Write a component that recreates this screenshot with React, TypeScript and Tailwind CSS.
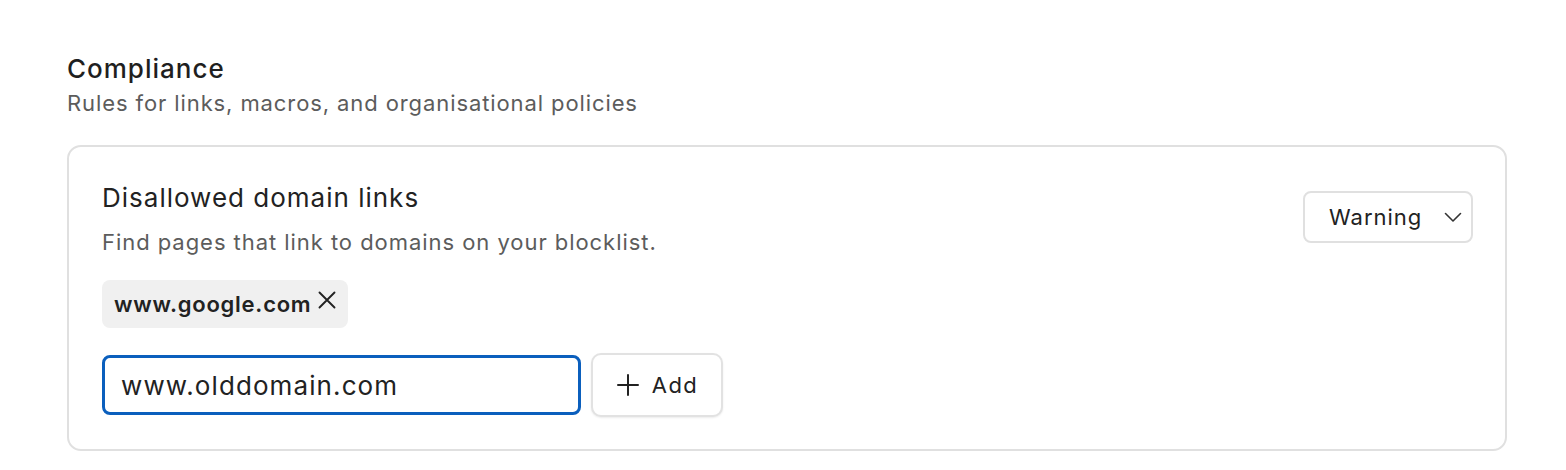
import React from "react";

export default function App() {
  return (
    <div
      className="w-[1566px] h-[470px] bg-white pl-[67px] pr-[60px] pt-[53px] text-[#222222]"
      style={{ fontFamily: "Inter, 'Noto Sans', sans-serif" }}
    >
      <h2 className="text-[26px] leading-[32px] font-medium tracking-[1px] text-[#1f1f1f]">Compliance</h2>
      <p className="mt-[3px] text-[22px] leading-[30px] tracking-[0.9px] text-[#5c5c5c]">
        Rules for links, macros, and organisational policies
      </p>
      <div className="mt-[27px] w-[1440px] rounded-[14px] border-2 border-[#e0e0e0] pl-[33px] pr-[32px] pt-[35px] pb-[32px]">
        <div className="flex items-start justify-between">
          <div>
            <div className="text-[26px] leading-[32px] tracking-[1px] text-[#222222]">Disallowed domain links</div>
            <div className="mt-[13px] text-[22px] leading-[30px] tracking-[0.95px] text-[#5c5c5c]">
              Find pages that link to domains on your blocklist.
            </div>
          </div>
          <button className="mt-[9px] flex h-[52px] w-[170px] items-center justify-between rounded-[8px] border-2 border-[#e0e0e0] bg-white pl-[24px] pr-[8px] text-[22px] tracking-[1px] text-[#222222]">
            <span>Warning</span>
            <svg width="20" height="20" viewBox="0 0 20 20" fill="none" stroke="#333" strokeWidth="1.6" strokeLinecap="round" strokeLinejoin="round">
              <path d="M2.5 6.5l7.5 7.5 7.5-7.5" />
            </svg>
          </button>
        </div>
        <div className="mt-[23px] flex">
          <div className="flex h-[48px] items-center gap-[6px] rounded-[8px] bg-[#f0f0f0] pl-[12px] pr-[11px] text-[22px] font-semibold tracking-[0.75px] text-[#222222]">
            <span>www.google.com</span>
            <svg className="-mt-[8px]" width="20" height="20" viewBox="0 0 20 20" fill="none" stroke="#222" strokeWidth="1.9" strokeLinecap="round">
              <path d="M2.5 2.5l15 15M17.5 2.5l-15 15" />
            </svg>
          </div>
        </div>
        <div className="mt-[25px] flex items-center gap-[10px]">
          <div className="flex h-[60px] w-[479px] items-center rounded-[8px] border-[3px] border-[#0b5fbd] pl-[16px] text-[26px] tracking-[1.1px] text-[#222222]">
            www.olddomain.com
          </div>
          <button className="flex h-[64px] w-[132px] items-center justify-center gap-[12px] rounded-[10px] border-2 border-[#e2e2e2] bg-white text-[22px] tracking-[1.4px] text-[#222222] shadow-[0_1px_2px_rgba(0,0,0,0.08)]">
            <svg width="24" height="24" viewBox="0 0 24 24" fill="none" stroke="#222" strokeWidth="2" strokeLinecap="round">
              <path d="M12 2v20M2 12h20" />
            </svg>
            <span>Add</span>
          </button>
        </div>
      </div>
    </div>
  );
}
